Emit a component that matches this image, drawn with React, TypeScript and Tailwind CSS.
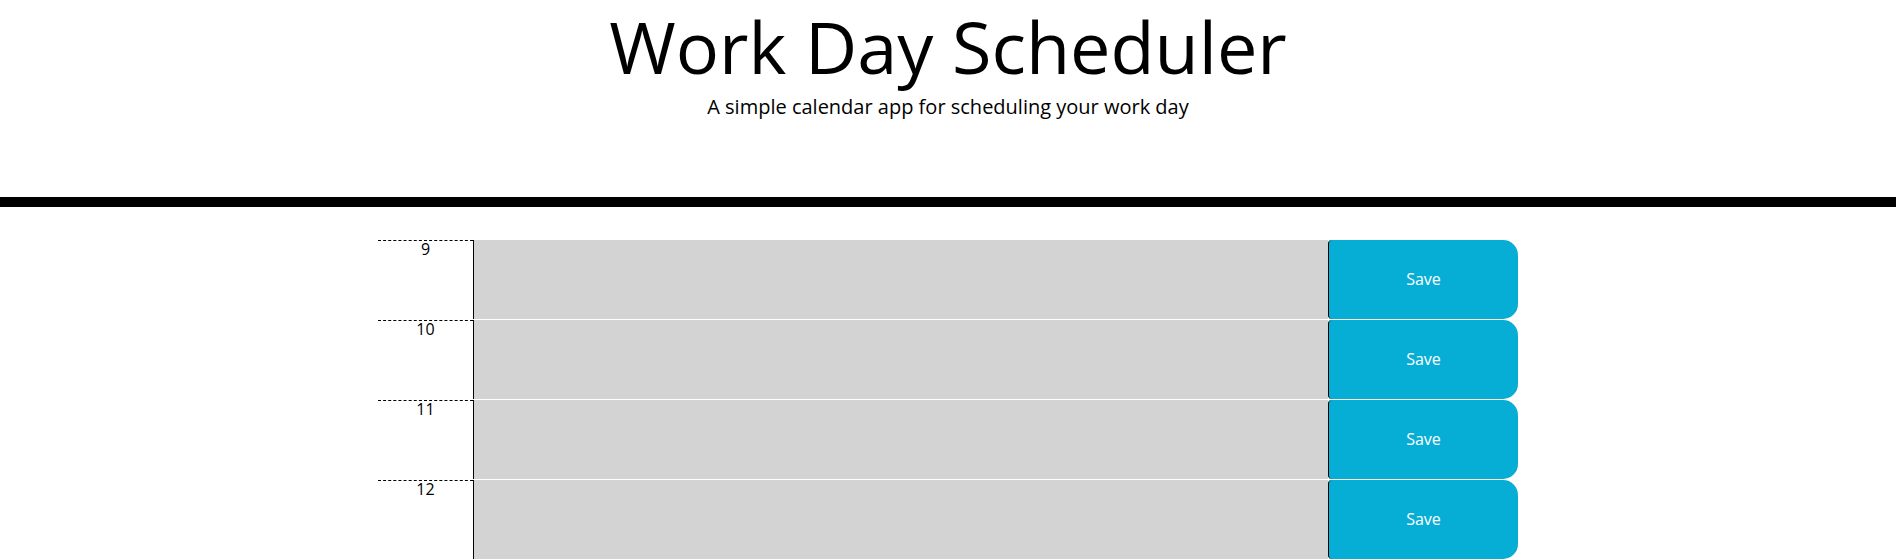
import React from "react";

const hours = [9, 10, 11, 12];

export default function App() {
  return (
    <div className="bg-white text-black font-['Open_Sans',sans-serif] leading-none">
      <header className="text-center pt-[3px] pb-[63.6px] border-b-[10px] border-black mb-8">
        <h1 className="text-[72px] font-normal leading-[1.2] mb-2">Work Day Scheduler</h1>
        <p className="text-[20px] leading-none mb-4">A simple calendar app for scheduling your work day</p>
      </header>
      <div className="w-[1140px] mx-auto">
        {hours.map((h) => (
          <div key={h} className="flex h-[80px] border-t border-white">
            <div className="w-[95px] shrink-0 bg-white border-t border-dashed border-black text-center text-[16px] leading-none text-black">
              {h}
            </div>
            <textarea
              className="w-[855px] shrink-0 bg-[#d3d3d3] border-0 border-l border-solid border-black p-[10px] resize-none text-black outline-none"
              defaultValue=""
            />
            <button className="w-[190px] shrink-0 bg-[#06AED5] text-white text-[16px] leading-[1.5] border-0 border-l border-solid border-black rounded-[4px] rounded-tr-[15px] rounded-br-[15px]">
              Save
            </button>
          </div>
        ))}
      </div>
    </div>
  );
}
